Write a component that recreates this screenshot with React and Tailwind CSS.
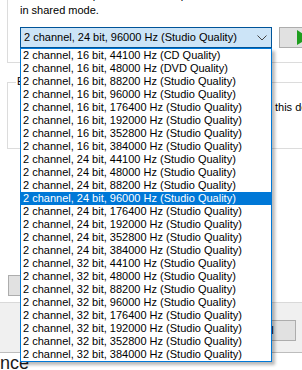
const rates = [44100, 48000, 88200, 96000, 176400, 192000, 352800, 384000]

const formats = [16, 24, 32].flatMap((bits) =>
  rates.map((rate) => {
    let quality = 'Studio Quality'
    if (bits === 16 && rate === 44100) quality = 'CD Quality'
    if (bits === 16 && rate === 48000) quality = 'DVD Quality'
    return `2 channel, ${bits} bit, ${rate} Hz (${quality})`
  })
)

const selected = '2 channel, 24 bit, 96000 Hz (Studio Quality)'

function Chevron() {
  return (
    <svg width="10" height="6" viewBox="0 0 10 6" className="block">
      <polyline points="0.5,0.5 5,5 9.5,0.5" fill="none" stroke="#444" strokeWidth="1" />
    </svg>
  )
}

function FormatList() {
  return (
    <div className="absolute left-[20px] top-[48px] w-[252px] border border-[#0078d7] bg-white shadow-[3px_3px_3px_rgba(0,0,0,0.28)]">
      {formats.map((f) => (
        <div
          key={f}
          className={`h-[13px] leading-[13px] pl-[2px] whitespace-nowrap ${
            f === selected ? 'bg-[#0078d7] text-white' : 'text-black'
          }`}
        >
          {f}
        </div>
      ))}
    </div>
  )
}

export default function App() {
  return (
    <div className="relative w-[302px] h-[370px] overflow-hidden bg-white text-black text-[11px] font-['Liberation_Sans',Arial,sans-serif]">
      <div className="h-[303px] border-b border-[#d9d9d9] overflow-hidden">
        <div className="ml-[7px] -mt-[12px] border-l border-b border-[#dcdcdc] pl-[12px] pb-[14px]">
          <p className="leading-[15px] whitespace-nowrap">
            Select the sample rate and bit depth to be used when running
          </p>
          <p className="leading-[15px]">in shared mode.</p>
          <div className="mt-[9px] flex">
            <div className="w-[252px] h-[21px] shrink-0 border border-[#005499] bg-[#cce4f7] flex items-center justify-between pl-[3px] pr-[4px]">
              <span className="leading-[19px] whitespace-nowrap">{selected}</span>
              <Chevron />
            </div>
            <div className="ml-[7px] w-[75px] h-[21px] shrink-0 border border-[#adadad] bg-[#e1e1e1] flex items-center pl-[17px]">
              <svg width="12" height="15" viewBox="0 0 12 15" className="block shrink-0">
                <polygon points="0,0 12,7.5 0,15" fill="#1f9e1f" />
              </svg>
            </div>
          </div>
        </div>

        <div className="relative ml-[7px] mt-[19px] h-[67px] border-l border-t border-b border-[#dcdcdc] pl-[12px]">
          <span className="absolute left-[8px] -top-[8px] bg-white px-px leading-[13px] whitespace-nowrap">
            Exclusive Mode
          </span>
          <div className="mt-[18px] flex items-center whitespace-nowrap leading-[13px]">
            <span className="w-[13px] h-[13px] border border-[#333] bg-white shrink-0" />
            <span className="ml-[5px] inline-block w-[237px] shrink-0 overflow-hidden">
              Allow applications to take exclusive control of
            </span>
            <span className="shrink-0">this device</span>
          </div>
        </div>

        <button className="ml-[8px] mt-[126px] w-[110px] h-[21px] border border-[#adadad] bg-[#e1e1e1] leading-[19px]">
          Restore Defaults
        </button>
      </div>

      <div className="h-[49px] bg-[#f0f0f0] flex justify-end pt-[17px] pr-[6px]">
        <button className="w-[75px] h-[21px] border border-[#adadad] bg-[#e1e1e1] leading-[19px] pr-[4px]">
          Cancel
        </button>
      </div>

      <div className="border-t border-[#bdbdbd] bg-white">
        <p className="text-[18px] leading-[16px] pt-[2px] text-[#1a1a1a]">nce</p>
      </div>

      <FormatList />
    </div>
  )
}
